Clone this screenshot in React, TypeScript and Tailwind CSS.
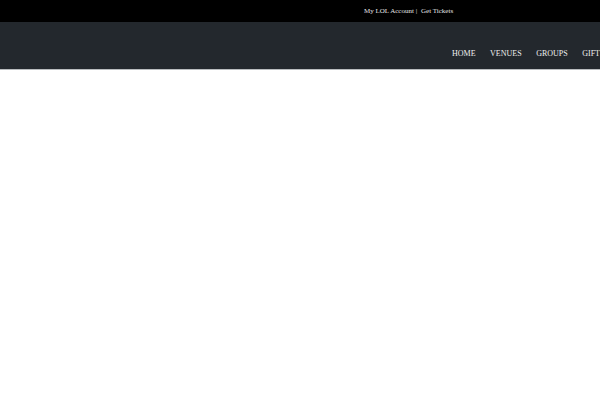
import React from 'react';

const navItems = ['HOME', 'VENUES', 'GROUPS', 'GIFT CARDS', 'CONTACT'];

export default function App() {
  return (
    <div className="w-[600px] h-[400px] bg-white overflow-hidden" style={{ fontFamily: '"Liberation Serif", "DejaVu Serif", serif' }}>
      <div className="h-[22px] bg-black flex items-center pl-[364px] text-[7px] text-[#e6e6e6] whitespace-nowrap">
        <span>My LOL Account |</span>
        <span className="ml-[4px]">Get Tickets</span>
      </div>
      <header className="h-[48px] bg-[#23282d] border-b border-[#b9bcbf] overflow-hidden">
        <ul className="flex gap-[14.5px] pl-[452px] pt-[26px] text-[8px] text-[#f0f0f0] whitespace-nowrap">
          {navItems.map((item) => (
            <li key={item}>{item}</li>
          ))}
        </ul>
      </header>
    </div>
  );
}
